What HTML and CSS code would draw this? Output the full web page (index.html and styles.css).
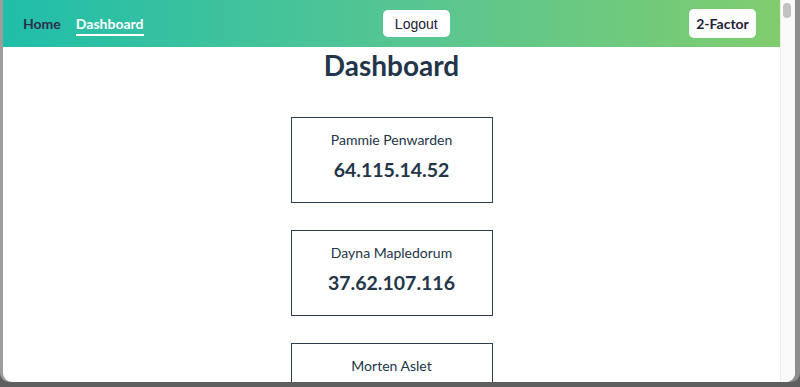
FILE: index.html
```html
<!DOCTYPE html>
<html lang="en">
  <head>
    <meta charset="UTF-8" />
    <title>Dashboard</title>
    <link rel="stylesheet" href="styles.css">
  </head>
  <body>
    <div class="desktop">
      <div class="window">
        <div class="viewport">
          <nav class="navbar">
            <div class="nav-links">
              <a class="nav-link" href="#">Home</a>
              <a class="nav-link active" href="#">Dashboard</a>
            </div>
            <button class="button logout">Logout</button>
            <button class="button two-factor">2-Factor</button>
          </nav>
          <main class="content">
            <h1 class="title">Dashboard</h1>
            <div class="card">
              <div class="card-name">Pammie Penwarden</div>
              <div class="card-ip">64.115.14.52</div>
            </div>
            <div class="card">
              <div class="card-name">Dayna Mapledorum</div>
              <div class="card-ip">37.62.107.116</div>
            </div>
            <div class="card">
              <div class="card-name">Morten Aslet</div>
            </div>
          </main>
        </div>
        <div class="scrollbar">
          <div class="thumb"></div>
        </div>
      </div>
    </div>
  </body>
</html>
```

FILE: styles.css
```css
/* --------------------
window frame
-------------------- */
body {
  margin: 0;
  font-family: Lato, "Noto Sans", sans-serif;
}
.desktop {
  height: 387px;
  background: #5f5f5f;
  overflow: hidden;
}
.window {
  display: flex;
  width: 792px;
  height: 382px;
  margin-left: 3px;
  background: #fff;
  border-radius: 0 0 9px 9px;
  overflow: hidden;
  box-shadow: -3px 0 0 #9c9c9c, 5px 0 0 #8e8e8e;
}
.viewport {
  flex: 1;
  overflow: hidden;
}
.scrollbar {
  width: 14px;
  background: #fafafa;
  border-left: 1px solid #ececec;
}
.thumb {
  width: 8px;
  height: 15px;
  margin: 3px 0 0 2px;
  background: #c2c2c2;
  border-radius: 4px;
}

/* --------------------
navbar
-------------------- */
.navbar {
  display: flex;
  justify-content: space-between;
  align-items: center;
  height: 47px;
  padding: 0 24px 0 20px;
  background: linear-gradient(90deg, #1fbea9 0%, #55c593 50%, #80cd6e 100%);
}
.nav-links {
  display: flex;
  gap: 15px;
  padding-top: 4px;
}
.nav-link {
  color: #2b2d4e;
  font-size: 14px;
  font-weight: 700;
  text-decoration: none;
  padding-bottom: 2px;
  border-bottom: 2px solid transparent;
}
.nav-link.active {
  color: #fff;
  border-bottom-color: #fff;
}
.button {
  background: #fff;
  border: none;
  border-radius: 5px;
  color: #1d2233;
  cursor: pointer;
}
.logout {
  width: 67px;
  height: 27px;
  font-family: "Liberation Sans", Arial, sans-serif;
  font-size: 14px;
}
.two-factor {
  width: 67px;
  height: 29px;
  font-family: Lato, sans-serif;
  font-size: 14px;
  font-weight: 700;
}

/* --------------------
dashboard
-------------------- */
.content {
  display: flex;
  flex-direction: column;
  align-items: center;
}
.title {
  margin: 1px 0 35px;
  font-size: 28px;
  line-height: 34px;
  color: #233548;
}
.card {
  width: 200px;
  height: 84px;
  margin-bottom: 27px;
  border: 1px solid #2c3d52;
  text-align: center;
  color: #233548;
  flex-shrink: 0;
}
.card-name {
  margin-top: 13px;
  font-size: 14px;
  line-height: 18px;
}
.card-ip {
  margin-top: 9px;
  font-size: 19.5px;
  font-weight: 700;
  line-height: 24px;
}
```
